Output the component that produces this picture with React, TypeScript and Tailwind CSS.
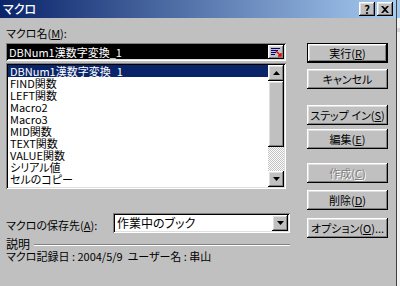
import React from 'react';

const raised =
  'bg-[#c0c0c0] shadow-[inset_-1px_-1px_#000,inset_1px_1px_#fff,inset_-2px_-2px_#808080,inset_2px_2px_#dfdfdf]';
const sunken =
  'shadow-[inset_1px_1px_#808080,inset_-1px_-1px_#fff,inset_2px_2px_#000,inset_-2px_-2px_#dfdfdf]';

const macros = [
  'DBNum1漢数字変換_1',
  'FIND関数',
  'LEFT関数',
  'Macro2',
  'Macro3',
  'MID関数',
  'TEXT関数',
  'VALUE関数',
  'シリアル値',
  'セルのコピー',
];

function Btn({
  children,
  mt,
  isDefault,
  disabled,
}: {
  children: React.ReactNode;
  mt: string;
  isDefault?: boolean;
  disabled?: boolean;
}) {
  return (
    <div className={`${mt} h-[20px] w-[81px] ${isDefault ? 'border border-black' : ''}`}>
      <div
        className={`${raised} h-full w-full flex items-center justify-center leading-[12px] whitespace-nowrap ${
          disabled ? 'text-[#808080] [text-shadow:1px_1px_#fff]' : 'text-black'
        }`}
      >
        {children}
      </div>
    </div>
  );
}

const U = ({ c }: { c: string }) => <span className="underline underline-offset-1">{c}</span>;

export default function App() {
  return (
    <div className="w-[400px] h-[286px] flex overflow-hidden bg-[#c0c0c0] text-[11px] text-black font-['Noto_Sans_CJK_JP',sans-serif] [font-feature-settings:'palt']">
      <div className="w-[396px] flex flex-col">
        {/* Title bar */}
        <div className="h-[18px] flex items-center bg-[linear-gradient(to_right,#0a246a,#a6caf0)] pl-[3px] pr-[3px]">
          <span className="text-white text-[12px] leading-[12px] font-medium">マクロ</span>
          <div className="ml-auto flex gap-[2px]">
            <div className={`${raised} w-[16px] h-[14px] flex items-center justify-center font-bold text-[11px] leading-[11px]`}>
              ?
            </div>
            <div className={`${raised} w-[16px] h-[14px] flex items-center justify-center`}>
              <svg width="8" height="7" viewBox="0 0 8 7">
                <path d="M0 0h2l2 2 2-2h2L5 3.5 8 7H6L4 5 2 7H0l3-3.5z" fill="#000" />
              </svg>
            </div>
          </div>
        </div>

        <div className="flex pl-[6px]">
          {/* Left column */}
          <div className="w-[284px] flex flex-col">
            <div className="mt-[9px] h-[12px] leading-[12px]">
              マクロ名(<U c="M" />):
            </div>

            <div className={`mt-[4px] h-[18px] w-[280px] bg-black ${sunken} flex items-center p-[2px]`}>
              <span className="text-white leading-[12px] pl-[1px]">DBNum1漢数字変換_1</span>
              <div className={`${raised} ml-auto w-[16px] h-[14px] flex items-center justify-center`}>
                <svg width="11" height="9" viewBox="0 0 11 9">
                  <rect x="0" y="0" width="9" height="1" fill="#000080" />
                  <rect x="0" y="2" width="7" height="1" fill="#000080" />
                  <rect x="0" y="4" width="5" height="1" fill="#000080" />
                  <rect x="0" y="6" width="4" height="1" fill="#000080" />
                  <path d="M5 3l5 5M7 8h3V5" stroke="#e00000" strokeWidth="1.4" fill="none" />
                </svg>
              </div>
            </div>

            <div className={`mt-[2px] h-[126px] w-[280px] bg-white ${sunken} p-[2px] flex`}>
              <div className="flex-1 flex flex-col overflow-hidden">
                {macros.map((m, i) => (
                  <div
                    key={m}
                    className={`h-[12px] leading-[12px] pl-[2px] shrink-0 whitespace-nowrap ${
                      i === 0 ? 'bg-[#0a246a] text-white' : ''
                    }`}
                  >
                    {m}
                  </div>
                ))}
              </div>
              <div className="w-[16px] flex flex-col">
                <div className={`${raised} h-[16px] flex items-center justify-center`}>
                  <svg width="7" height="4" viewBox="0 0 7 4">
                    <path d="M3.5 0L7 4H0z" fill="#000" />
                  </svg>
                </div>
                <div className={`${raised} h-[66px]`} />
                <div className="flex-1 bg-[repeating-conic-gradient(#c0c0c0_0_25%,#fff_0_50%)] bg-[length:2px_2px]" />
                <div className={`${raised} h-[16px] flex items-center justify-center`}>
                  <svg width="7" height="4" viewBox="0 0 7 4">
                    <path d="M0 0h7L3.5 4z" fill="#000" />
                  </svg>
                </div>
              </div>
            </div>

            <div className="mt-[24px] h-[20px] flex items-center">
              <span className="leading-[12px] pt-[4px]">
                マクロの保存先(<U c="A" />):
              </span>
              <div className={`ml-auto w-[177px] h-[20px] bg-white ${sunken} p-[2px] flex items-center`}>
                <span className="leading-[12px] text-[12px] pl-[2px]">作業中のブック</span>
                <div className={`${raised} ml-auto w-[16px] h-[16px] flex items-center justify-center`}>
                  <svg width="7" height="4" viewBox="0 0 7 4">
                    <path d="M0 0h7L3.5 4z" fill="#000" />
                  </svg>
                </div>
              </div>
            </div>

            <div className="mt-[5px] h-[12px] flex items-center">
              <span className="leading-[12px] text-[12px]">説明</span>
              <div className="flex-1 ml-[4px] mt-[1px] border-t border-t-[#808080] border-b border-b-white" />
            </div>
            <div className="h-[12px] leading-[12px] whitespace-pre">
              マクロ記録日 : 2004/5/9  ユーザー名 : 串山
            </div>
          </div>

          {/* Right buttons */}
          <div className="ml-[17px] mt-[25px] flex flex-col">
            <Btn mt="mt-0" isDefault>
              実行(<U c="R" />)
            </Btn>
            <Btn mt="mt-[6px]">キャンセル</Btn>
            <Btn mt="mt-[16px]">
              ステップ イン(<U c="S" />)
            </Btn>
            <Btn mt="mt-[4px]">
              編集(<U c="E" />)
            </Btn>
            <Btn mt="mt-[14px]" disabled>
              作成(<U c="C" />)
            </Btn>
            <Btn mt="mt-[7px]">
              削除(<U c="D" />)
            </Btn>
            <Btn mt="mt-[8px]">
              オプション(<U c="O" />)...
            </Btn>
          </div>
        </div>
      </div>
      <div className="flex-1 border-l border-l-[#404040] bg-[#f4f4f4] flex flex-col">
        <div className="h-[18px] bg-[#a6caf0]" />
        <div className="h-[10px]" />
        <div className="h-[4px] bg-[#d8d8d8]" />
      </div>
    </div>
  );
}
